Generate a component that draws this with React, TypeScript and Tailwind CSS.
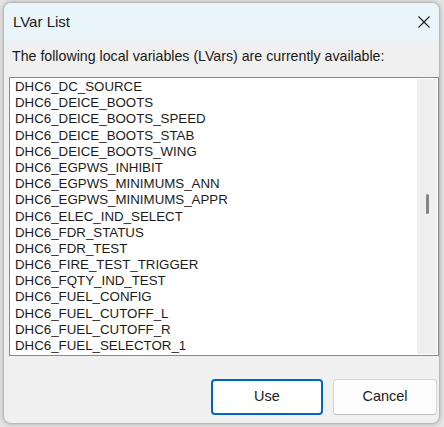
import React from "react";

const items = [
  "DHC6_DC_SOURCE",
  "DHC6_DEICE_BOOTS",
  "DHC6_DEICE_BOOTS_SPEED",
  "DHC6_DEICE_BOOTS_STAB",
  "DHC6_DEICE_BOOTS_WING",
  "DHC6_EGPWS_INHIBIT",
  "DHC6_EGPWS_MINIMUMS_ANN",
  "DHC6_EGPWS_MINIMUMS_APPR",
  "DHC6_ELEC_IND_SELECT",
  "DHC6_FDR_STATUS",
  "DHC6_FDR_TEST",
  "DHC6_FIRE_TEST_TRIGGER",
  "DHC6_FQTY_IND_TEST",
  "DHC6_FUEL_CONFIG",
  "DHC6_FUEL_CUTOFF_L",
  "DHC6_FUEL_CUTOFF_R",
  "DHC6_FUEL_SELECTOR_1",
];

export default function App() {
  return (
    <div className="w-[444px] h-[427px] bg-[#e4e4e4] pt-[2px] pl-[3px] overflow-hidden" style={{ fontFamily: '"Liberation Sans", Arial, sans-serif' }}>
      <div className="w-[437px] h-[422px] rounded-[8px] border border-[#b9b9b9] bg-[#f0f0f0] flex flex-col overflow-hidden shadow-[0_0_4px_rgba(0,0,0,0.25)]">
        <div className="h-[38px] bg-[#e9f5f9] flex items-center justify-between pl-[9px] pr-[6px] shrink-0">
          <span className="text-[15px] text-[#1a1a1a]">LVar List</span>
          <svg width="14" height="14" viewBox="0 0 14 14" className="mr-[2px]">
            <path d="M1.5 1.5 L12.5 12.5 M12.5 1.5 L1.5 12.5" stroke="#1a1a1a" strokeWidth="1.1" fill="none" />
          </svg>
        </div>
        <div className="pl-[8px] pt-[6px] h-[36px] text-[14.2px] text-[#1a1a1a] leading-[18px]">
          The following local variables (LVars) are currently available:
        </div>
        <div className="ml-[5px] w-[430px] h-[279px] border border-[#868a91] bg-white flex">
          <div className="flex-1 pl-[5px] pt-[1px] overflow-hidden">
            {items.map((t) => (
              <div key={t} className="h-[16.2px] leading-[16px] text-[13.3px] text-[#1a1a1a] whitespace-nowrap">
                {t}
              </div>
            ))}
          </div>
          <div className="w-[20px] bg-[#efefef] mr-[1px] my-[1px] flex justify-center">
            <div className="w-[3px] h-[20px] mt-[115px] rounded-full bg-[#858585]" />
          </div>
        </div>
        <div className="flex justify-end gap-[10px] pr-[2px] mt-[23px]">
          <button className="w-[112px] h-[36px] rounded-[4px] border-2 border-[#0067c0] bg-white text-[14.5px] text-[#1a1a1a]">
            Use
          </button>
          <button className="w-[104px] h-[36px] rounded-[4px] border border-[#d3d3d3] border-b-[#c0c0c0] bg-[#fdfdfd] text-[14.5px] text-[#1a1a1a]">
            Cancel
          </button>
        </div>
      </div>
    </div>
  );
}
